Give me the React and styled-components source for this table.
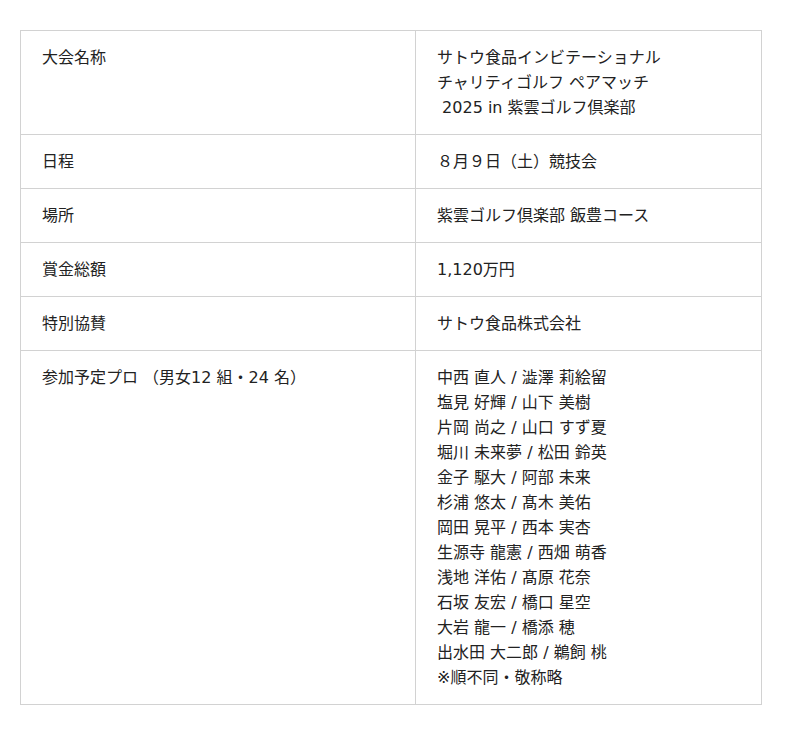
import React from "react";
import styled, { createGlobalStyle } from "styled-components";

const GlobalStyle = createGlobalStyle`
  body {
    margin: 0;
    background: #fff;
    font-family: "DejaVu Sans", "Noto Sans CJK JP", sans-serif;
    color: #222;
  }
`;

const Page = styled.div`
  padding: 30px 0 0 20px;
`;

const Table = styled.table`
  width: 742px;
  border-collapse: collapse;
  font-size: 16px;
  line-height: 25px;
`;

const Cell = styled.td`
  border: 1px solid #d2d2d2;
  padding: 14px 21px;
  vertical-align: top;
  width: ${({ $label }) => ($label ? "352px" : "auto")};
  white-space: pre-wrap;
`;

const Lines = styled.div`
  display: flex;
  flex-direction: column;
`;

const players = [
  "中西 直人 / 澁澤 莉絵留",
  "塩見 好輝 / 山下 美樹",
  "片岡 尚之 / 山口 すず夏",
  "堀川 未来夢 / 松田 鈴英",
  "金子 駆大 / 阿部 未来",
  "杉浦 悠太 / 髙木 美佑",
  "岡田 晃平 / 西本 実杏",
  "生源寺 龍憲 / 西畑 萌香",
  "浅地 洋佑 / 髙原 花奈",
  "石坂 友宏 / 橋口 星空",
  "大岩 龍一 / 橋添 穂",
  "出水田 大二郎 / 鵜飼 桃",
  "※順不同・敬称略",
];

const rows = [
  {
    label: "大会名称",
    value: [
      "サトウ食品インビテーショナル",
      "チャリティゴルフ ペアマッチ",
      " 2025 in 紫雲ゴルフ倶楽部",
    ],
  },
  { label: "日程", value: ["８月９日（土）競技会"] },
  { label: "場所", value: ["紫雲ゴルフ倶楽部 飯豊コース"] },
  { label: "賞金総額", value: ["1,120万円"] },
  { label: "特別協賛", value: ["サトウ食品株式会社"] },
  { label: "参加予定プロ （男女12 組・24 名）", value: players },
];

export default function App() {
  return (
    <Page>
      <GlobalStyle />
      <Table>
        <tbody>
          {rows.map((row) => (
            <tr key={row.label}>
              <Cell $label>{row.label}</Cell>
              <Cell>
                <Lines>
                  {row.value.map((line) => (
                    <span key={line}>{line}</span>
                  ))}
                </Lines>
              </Cell>
            </tr>
          ))}
        </tbody>
      </Table>
    </Page>
  );
}
